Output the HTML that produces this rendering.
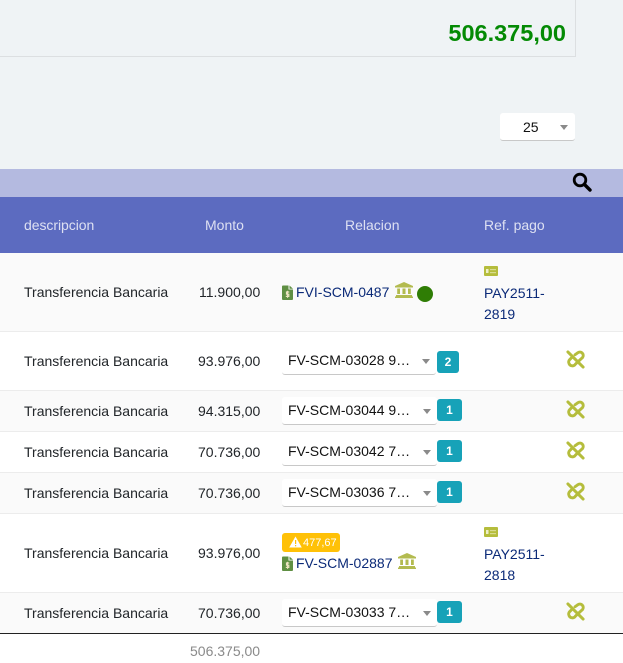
<!DOCTYPE html>
<html>
<head>
<meta charset="utf-8">
<style>
html,body{margin:0;padding:0}
body{width:623px;height:663px;position:relative;overflow:hidden;background:#eff3f5;font-family:"Liberation Sans",sans-serif;font-size:14px;color:#212529}
.a{position:absolute}
.t{position:absolute;white-space:nowrap;line-height:20px}
.row{position:absolute;left:0;width:623px;box-sizing:border-box;border-bottom:1px solid #ececec}
.odd{background:#fafafa}.even{background:#fff}
.sel{position:absolute;left:282px;width:155px;height:27px;background:#fff;border-radius:3px;border-bottom:1px solid #c8c8c8;box-sizing:content-box;color:#111;line-height:27px;text-indent:6px;white-space:nowrap}
.sel:after{content:"";position:absolute;right:6px;top:12px;border-left:4.5px solid transparent;border-right:4.5px solid transparent;border-top:5px solid #8a8a8a}
.bd{position:absolute;left:437px;width:25px;height:22px;background:#17a2b8;border-radius:3px;color:#fff;font-size:12px;font-weight:bold;text-align:center;line-height:22px}
.blue{color:#0b2a78}
svg{position:absolute;display:block}
</style>
</head>
<body>
<svg width="0" height="0" style="position:absolute">
<defs>
<symbol id="lnk" viewBox="0 0 20 20"><g fill="none" stroke="#b5bd3c" stroke-width="3.100" stroke-linecap="round"><path d="M2 2L18 18"/><path d="M9.500 5L12.500 2.800a3.600 3.600 0 0 1 5 5L10 14.800a3.800 3.800 0 0 1-6.800-0.500a3.600 3.600 0 0 1 .8-4.300L5.500 8.500"/></g></symbol>
<symbol id="doc" viewBox="0 0 11 15"><path d="M0 1.500Q0 .5 1 .5H6.500V4.500H11V14Q11 15 10 15H1Q0 15 0 14Z" fill="#5f8f43"/><path d="M7.500 .5L11 3.700H7.500Z" fill="#5f8f43"/><path d="M7.300 7H4.500V9.200H6.800V11.400H3.800" fill="none" stroke="#ece3c0" stroke-width="1.200"/><rect x="5" y="5.800" width="1.100" height="7" fill="#ece3c0"/></symbol>
<symbol id="bank" viewBox="0 0 18 16"><path d="M9 0L18 4V5.500H0V4Z" fill="#b3bb4f"/><path d="M2.200 6.500H5V12H2.200ZM7.500 6.500H10.500V12H7.500ZM13 6.500H15.800V12H13Z" fill="#b3bb4f"/><path d="M1 13H17V14.500H18V16H0V14.500H1Z" fill="#b3bb4f"/></symbol>
<symbol id="card" viewBox="0 0 14 10"><rect width="14" height="10" rx="1" fill="#b5bd3c"/><rect x="2" y="3" width="2.500" height="4" fill="#eef0c8"/><rect x="6" y="3" width="6" height="1.200" fill="#d8dc90"/><rect x="6" y="6" width="6" height="1.200" fill="#d8dc90"/></symbol>
</defs>
</svg>

<!-- top panel -->
<div class="a" style="left:-2px;top:-2px;width:576px;height:57px;border:1px solid #dcdfe1;background:#eff3f5"></div>
<div class="t" style="right:57px;top:19px;font-size:23.500px;font-weight:bold;color:#048a04;line-height:28px">506.375,00</div>

<!-- page size select -->
<div class="a" style="left:500px;top:113px;width:75px;height:27px;background:#fff;border-radius:3px;border-bottom:1px solid #c8c8c8"></div>
<div class="t" style="left:523px;top:117px;color:#111">25</div>
<div class="a" style="left:560px;top:125px;border-left:4.500px solid transparent;border-right:4.500px solid transparent;border-top:5px solid #8a8a8a"></div>

<!-- search bar -->
<div class="a" style="left:0;top:169px;width:623px;height:28px;background:#b4bae0"></div>
<svg style="left:572px;top:172px" width="20" height="20" viewBox="0 0 20 20"><circle cx="8" cy="8" r="5.800" fill="none" stroke="#000" stroke-width="2.800"/><path d="M12.500 12.500L18 18" stroke="#000" stroke-width="3.400" stroke-linecap="round"/></svg>

<!-- header -->
<div class="a" style="left:0;top:197px;width:623px;height:56px;background:#5c6bc0"></div>
<div class="t" style="left:24px;top:215px;color:#dde0f2;letter-spacing:-.05px">descripcion</div>
<div class="t" style="left:205px;top:215px;color:#dde0f2">Monto</div>
<div class="t" style="left:345px;top:215px;color:#dde0f2">Relacion</div>
<div class="t" style="left:484px;top:215px;color:#dde0f2">Ref. pago</div>

<!-- rows -->
<div class="row odd" style="top:253px;height:79px"></div>
<div class="row even" style="top:332px;height:59px"></div>
<div class="row odd" style="top:391px;height:41px"></div>
<div class="row even" style="top:432px;height:41px"></div>
<div class="row odd" style="top:473px;height:41px"></div>
<div class="row even" style="top:514px;height:79px"></div>
<div class="row odd" style="top:593px;height:40px;border-bottom:0"></div>
<div class="a" style="left:0;top:633px;width:623px;height:1px;background:#222"></div>
<div class="a" style="left:0;top:634px;width:623px;height:29px;background:#fff"></div>

<!-- row 1 -->
<div class="t" style="left:24px;top:282px">Transferencia Bancaria</div>
<div class="t" style="left:199px;top:282px">11.900,00</div>
<svg style="left:282px;top:285px" width="11" height="15"><use href="#doc"/></svg>
<div class="t blue" style="left:296px;top:282px">FVI-SCM-0487</div>
<svg style="left:395px;top:282px" width="18" height="16"><use href="#bank"/></svg>
<div class="a" style="left:417px;top:286px;width:16px;height:16px;border-radius:50%;background:#2f7d05"></div>
<svg style="left:484px;top:266px" width="14" height="10"><use href="#card"/></svg>
<div class="t blue" style="left:484px;top:283px;line-height:21px">PAY2511-<br>2819</div>

<!-- row 2 -->
<div class="t" style="left:24px;top:351px">Transferencia Bancaria</div>
<div class="t" style="left:198px;top:351px">93.976,00</div>
<div class="sel" style="top:347px;width:154px">FV-SCM-03028 9…</div>
<div class="bd" style="top:351px;width:22px">2</div>
<svg style="left:566px;top:350px" width="19" height="19"><use href="#lnk"/></svg>

<!-- row 3 -->
<div class="t" style="left:24px;top:401px">Transferencia Bancaria</div>
<div class="t" style="left:198px;top:401px">94.315,00</div>
<div class="sel" style="top:397px">FV-SCM-03044 9…</div>
<div class="bd" style="top:399px">1</div>
<svg style="left:566px;top:400px" width="19" height="19"><use href="#lnk"/></svg>

<!-- row 4 -->
<div class="t" style="left:24px;top:442px">Transferencia Bancaria</div>
<div class="t" style="left:198px;top:442px">70.736,00</div>
<div class="sel" style="top:438px">FV-SCM-03042 7…</div>
<div class="bd" style="top:440px">1</div>
<svg style="left:566px;top:441px" width="19" height="19"><use href="#lnk"/></svg>

<!-- row 5 -->
<div class="t" style="left:24px;top:483px">Transferencia Bancaria</div>
<div class="t" style="left:198px;top:483px">70.736,00</div>
<div class="sel" style="top:479px">FV-SCM-03036 7…</div>
<div class="bd" style="top:481px">1</div>
<svg style="left:566px;top:482px" width="19" height="19"><use href="#lnk"/></svg>

<!-- row 6 -->
<div class="t" style="left:24px;top:543px">Transferencia Bancaria</div>
<div class="t" style="left:198px;top:543px">93.976,00</div>
<div class="a" style="left:282px;top:533px;width:58px;height:19px;background:#ffc107;border-radius:3px"></div>
<svg style="left:289px;top:536px" width="13" height="12" viewBox="0 0 13 12"><path d="M6.500 .5L12.800 11.500H.2Z" fill="#fff"/><rect x="6" y="4" width="1.200" height="4" fill="#ffc107"/><rect x="6" y="9" width="1.200" height="1.300" fill="#ffc107"/></svg>
<div class="t" style="left:303px;top:534px;font-size:11px;line-height:19px;color:#fff">477,67</div>
<svg style="left:282px;top:556px" width="11" height="15"><use href="#doc"/></svg>
<div class="t blue" style="left:296px;top:553px">FV-SCM-02887</div>
<svg style="left:398px;top:553px" width="18" height="16"><use href="#bank"/></svg>
<svg style="left:484px;top:527px" width="14" height="10"><use href="#card"/></svg>
<div class="t blue" style="left:484px;top:544px;line-height:21px">PAY2511-<br>2818</div>

<!-- row 7 -->
<div class="t" style="left:24px;top:603px">Transferencia Bancaria</div>
<div class="t" style="left:198px;top:603px">70.736,00</div>
<div class="sel" style="top:599px">FV-SCM-03033 7…</div>
<div class="bd" style="top:601px">1</div>
<svg style="left:566px;top:602px" width="19" height="19"><use href="#lnk"/></svg>

<!-- footer -->
<div class="t" style="left:190px;top:641px;color:#8a8a8a">506.375,00</div>
</body>
</html>
